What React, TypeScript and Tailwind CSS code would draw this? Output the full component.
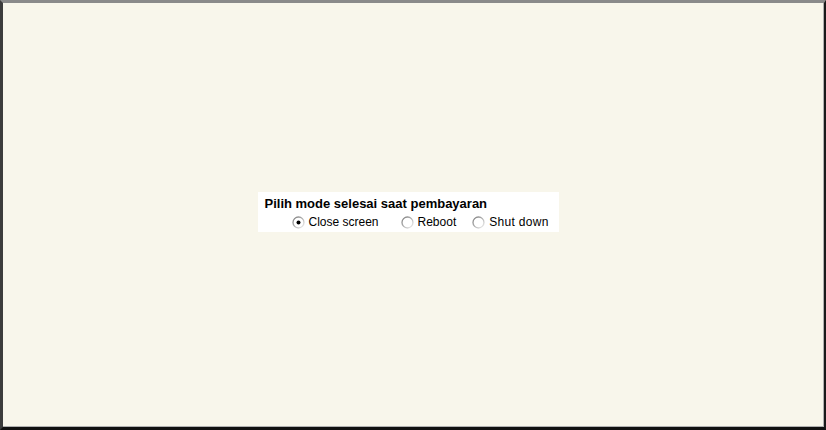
function Radio({ checked }: { checked?: boolean }) {
  return (
    <svg width="13" height="13" viewBox="0 0 13 13" className="shrink-0">
      <defs>
        <linearGradient id={checked ? "rg1" : "rg0"} x1="0" y1="0" x2="1" y2="1">
          <stop offset="0" stopColor="#7a7a7a" />
          <stop offset="0.55" stopColor="#b8b8b8" />
          <stop offset="1" stopColor="#f4f4f4" />
        </linearGradient>
      </defs>
      <circle cx="6.5" cy="6.5" r="5.5" fill="#ffffff" stroke={`url(#${checked ? "rg1" : "rg0"})`} strokeWidth="1.3" />
      {checked && <circle cx="6.5" cy="6.5" r="2" fill="#000000" />}
    </svg>
  );
}

export default function App() {
  return (
    <div className="h-[430px] w-[826px] overflow-hidden bg-[#2a2a2a]">
      <div className="flex h-full w-full flex-col border-t-[3px] border-l-[3px] border-r-[2px] border-b-[3px] border-t-[#8a8a8a] border-l-[#3c3c3c] border-r-[#1a1a1a] border-b-[#111111]">
        <div className="flex flex-1 items-start justify-center border-r border-b border-r-[#b0b0b0] border-b-[#b0b0b0] bg-[#f8f6eb] font-['Liberation_Sans',Arial,sans-serif]">
          <div className="mt-[189px] mr-[10px] flex h-[40px] w-[301px] flex-col bg-white pl-[7px] pt-[4px]">
            <div className="text-[13px] leading-[15px] font-bold text-black">Pilih mode selesai saat pembayaran</div>
            <div className="mt-[3px] flex items-center pl-[27px] text-[12px] leading-[16px] text-black">
              <Radio checked />
              <span className="ml-[4px]">Close screen</span>
              <span className="ml-[22px]"><Radio /></span>
              <span className="ml-[4px]">Reboot</span>
              <span className="ml-[16px]"><Radio /></span>
              <span className="ml-[4px] tracking-[0.3px]">Shut down</span>
            </div>
          </div>
        </div>
      </div>
    </div>
  );
}
